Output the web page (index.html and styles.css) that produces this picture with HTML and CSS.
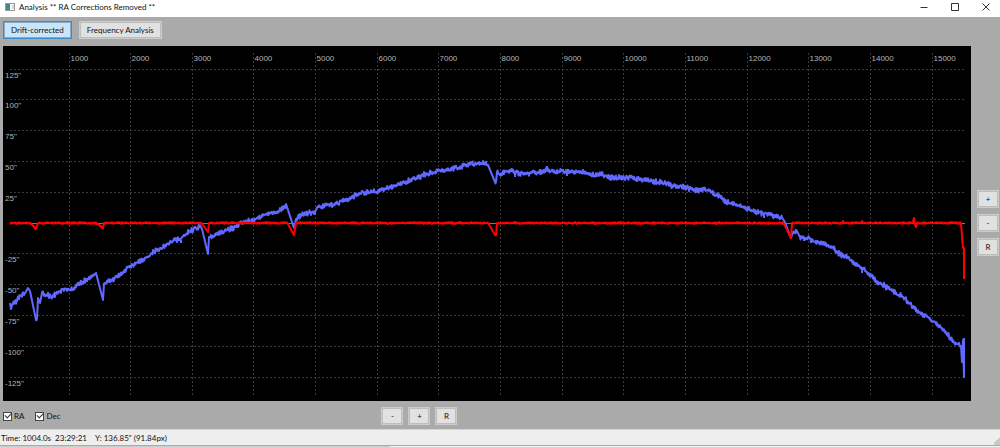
FILE: index.html
```html
<!DOCTYPE html>
<html lang="en">
<head>
    <meta charset="UTF-8">
    <meta name="viewport" content="width=device-width, initial-scale=1.0">
    <title>Analysis ** RA Corrections Removed **</title>
    <link rel="stylesheet" href="styles.css">
</head>
<body>
    <header class="titlebar">
        <svg class="app-icon" viewBox="0 0 10 8" aria-hidden="true">
            <defs>
                <linearGradient id="iconFill" x1="0" y1="0" x2="0" y2="1">
                    <stop offset="0" stop-color="#3f7fa8"/>
                    <stop offset="1" stop-color="#3f9a62"/>
                </linearGradient>
            </defs>
            <rect x="0.5" y="0.5" width="9" height="7" fill="#fafafa" stroke="#999"/>
            <rect x="1" y="1" width="4" height="6" fill="url(#iconFill)"/>
            <rect x="7" y="2" width="2" height="4" fill="#d5d5d5"/>
        </svg>
        <h1>Analysis ** RA Corrections Removed **</h1>
        <div class="window-buttons">
            <button aria-label="Minimize"><svg viewBox="0 0 8 8"><path d="M0.5 4.5H7.5"/></svg></button>
            <button aria-label="Maximize"><svg viewBox="0 0 8 8"><path d="M0.5 0.5H7.5V7.5H0.5Z"/></svg></button>
            <button aria-label="Close"><svg viewBox="0 0 8 8"><path d="M0.5 0.5L7.5 7.5M7.5 0.5L0.5 7.5"/></svg></button>
        </div>
    </header>

    <main class="workspace">
        <div class="toolbar">
            <button class="btn active">Drift-corrected</button>
            <button class="btn">Frequency Analysis</button>
        </div>

        <div class="chart-row">
            <svg class="chart" id="chart" viewBox="3 46 968 355" role="img" aria-label="Drift-corrected RA and Dec"></svg>
            <div class="zoom-vertical">
                <button class="btn square">+</button>
                <button class="btn square">-</button>
                <button class="btn square">R</button>
            </div>
        </div>

        <div class="controls">
            <div class="series">
                <label><input type="checkbox" id="showRa" checked>RA</label>
                <label><input type="checkbox" id="showDec" checked>Dec</label>
            </div>
            <div class="zoom-horizontal">
                <button class="btn square">-</button>
                <button class="btn square">+</button>
                <button class="btn square">R</button>
            </div>
        </div>
    </main>

    <footer class="statusbar">
        <span>Time: 1004.0s&nbsp; 23:29:21</span>
        <span>Y: 136.85" (91.84px)</span>
        <svg class="grip" viewBox="0 0 6 7" aria-hidden="true">
            <path d="M4 0h2v2H4zM2 2h4v2H2zM0 4h6v3H0z"/>
        </svg>
    </footer>
    <div class="bottom-strip"></div>

    <script src="script.js"></script>
</body>
</html>
```
FILE: styles.css
```css
* {
    box-sizing: border-box;
}
body {
    margin: 0;
    min-height: 100vh;
    display: flex;
    flex-direction: column;
    background-color: #aaa;
    color: #111;
    font-family: Lato, "Open Sans", sans-serif;
    font-size: 8px;
    line-height: 12px;
}
button, input {
    font: inherit;
    color: inherit;
}
.titlebar {
    display: flex;
    align-items: center;
    height: 17px;
    padding: 0 10px 3px 5px;
    background-color: #fff;
}
.titlebar h1 {
    margin: 0 auto 0 4px;
    font-size: 8px;
    font-weight: 400;
}
.app-icon {
    width: 10px;
    height: 8px;
}
.window-buttons {
    display: flex;
    gap: 23px;
}
.window-buttons button {
    display: flex;
    padding: 0;
    border: 0;
    background: none;
}
.window-buttons svg {
    width: 8px;
    height: 8px;
    fill: none;
    stroke: #333;
}
.workspace {
    flex: 1;
    display: flex;
    flex-direction: column;
    padding: 0 1px 0 3px;
}
.toolbar {
    display: flex;
    gap: 7px;
    padding: 4px 0 7px;
}
.btn {
    height: 18px;
    padding: 0 7px;
    border: 1px solid #ccc;
    background-color: #e1e1e1;
    box-shadow: inset 0 0 0 1px #bdbdbd;
    line-height: 14px;
    white-space: nowrap;
}
.btn.active {
    border-color: #3c8ac8;
    background-color: #cce4f7;
    box-shadow: inset 0 0 0 1px #7faed2;
}
.btn.square {
    width: 22px;
    padding: 0;
}
.chart-row {
    display: flex;
    align-items: center;
    gap: 6px;
}
.chart {
    flex: 1;
    min-width: 0;
    display: block;
    background-color: #000;
}
.zoom-vertical {
    display: flex;
    flex-direction: column;
    gap: 6px;
    padding-bottom: 2px;
}
.grid-line {
    stroke: #3c3c3c;
    stroke-dasharray: 2 2;
}
.zero-line {
    stroke: #777;
}
.axis-label {
    fill: #b4b4b4;
    font-family: "Liberation Sans", Arial, sans-serif;
    font-size: 8px;
}
.trace {
    fill: none;
    stroke-linejoin: round;
}
.trace.ra {
    stroke: #6068ff;
    stroke-width: 2;
}
.trace.dec {
    stroke: #f00;
    stroke-width: 2;
}
.controls {
    display: grid;
    grid-template-columns: 38% auto;
    justify-content: start;
    align-items: center;
    height: 28px;
    padding: 2px 0 0;
}
.series {
    display: flex;
    gap: 11px;
}
.series label {
    display: flex;
    align-items: center;
    gap: 2px;
}
.series input {
    appearance: none;
    width: 9px;
    height: 9px;
    margin: 0;
    border: 1px solid #444;
    background: #fff;
    display: grid;
    place-items: center;
}
.series input:checked::before {
    content: "";
    width: 5px;
    height: 3px;
    margin-bottom: 2px;
    border: solid #333;
    border-width: 0 0 1px 1px;
    transform: rotate(-45deg);
}
.zoom-horizontal {
    display: flex;
    gap: 5px;
}
.statusbar {
    display: flex;
    align-items: center;
    gap: 8px;
    height: 16px;
    padding-left: 1px;
    border-top: 1px solid #d5d5d5;
    background-color: #eee;
}
.grip {
    width: 6px;
    height: 7px;
    margin-left: auto;
    align-self: flex-end;
    fill: #c8c8c8;
}
.bottom-strip {
    height: 2px;
    border-top: 1px solid #aaa;
    background: linear-gradient(to right, #ccc 39%, #f5f5f5 39%);
}
```
FILE: script.js
```javascript
const SVG_NS = 'http://www.w3.org/2000/svg';
const chart = document.getElementById('chart');

const ZERO_Y = 223.5;
const STEP_Y = 30.8;
const FIRST_X = 69.5;
const STEP_X = 61.65;

const raPoints = [
    [10, 303], [11, 309], [12, 305], [16, 301], [20, 297], [24, 293], [28, 288], [30, 291], [36, 320], [37, 319],
    [38, 298], [40, 303], [42, 293], [45, 295], [53, 296], [60, 291], [63, 289], [73, 290], [80, 283],
    [88, 279], [96, 273], [103, 300], [104, 284], [110, 281], [120, 275], [130, 266], [142, 260],
    [152, 253], [165, 246], [175, 240], [181, 240], [184, 235], [192, 230], [200, 226], [202, 229],
    [208, 254], [209, 237], [213, 236], [222, 232], [235, 227], [246, 221], [255, 221], [258, 217],
    [265, 214], [275, 213], [286, 206], [294, 228], [296, 219], [302, 214], [314, 212], [317, 208],
    [325, 205], [335, 204], [348, 199], [360, 193], [373, 192], [385, 189], [400, 184], [415, 178],
    [430, 173], [440, 171], [455, 168], [470, 164], [487, 163], [488, 165], [495, 182], [496, 182],
    [497, 172], [500, 175], [506, 171], [512, 170], [516, 173], [530, 173], [540, 172], [547, 169],
    [555, 172], [567, 171], [583, 172], [592, 175], [600, 174], [610, 178], [622, 177], [635, 178],
    [650, 181], [665, 183], [675, 187], [685, 187], [692, 190], [706, 190], [716, 194], [726, 202],
    [735, 204], [748, 209], [760, 213], [772, 215], [782, 218], [785, 222], [790, 236], [791, 238],
    [793, 232], [797, 231], [800, 237], [808, 238], [814, 242], [825, 243], [835, 250], [842, 256],
    [848, 257], [855, 264], [862, 268], [870, 275], [877, 282], [885, 286], [895, 292], [905, 299],
    [915, 309], [925, 316], [935, 323], [945, 332], [955, 343], [961, 346], [962, 362], [963, 340],
    [964, 377], [964, 338]
];

const decPoints = [
    [10, 223], [30, 223], [36, 229], [38, 223], [96, 223], [103, 228], [104, 223], [201, 223],
    [208, 232], [209, 223], [287, 223], [294, 235], [296, 223], [488, 223], [495, 235], [496, 235],
    [497, 223], [783, 223], [791, 238], [792, 223], [842, 223], [843, 221], [844, 223], [861, 223],
    [862, 221], [863, 223], [913, 223], [914, 218], [915, 225], [916, 227], [917, 223], [961, 223],
    [963, 248], [964, 248], [964, 279]
];

// short vertical ticks below or above the RA trace
const raSpikes = [[181, 243], [315, 215], [515, 177], [547, 166], [567, 176], [637, 182], [764, 218], [804, 241], [862, 273], [916, 312]];

let seed = 17;
function random() {
    seed = (seed * 16807) % 2147483647;
    return seed / 2147483647;
}

function add(name, attrs, text) {
    const el = document.createElementNS(SVG_NS, name);
    for (const key in attrs) el.setAttribute(key, attrs[key]);
    if (text) el.textContent = text;
    chart.appendChild(el);
    return el;
}

function noisyPath(points, amount) {
    let d = `M${points[0]}`;
    for (let i = 1; i < points.length; i++) {
        const [x0, y0] = points[i - 1];
        const [x1, y1] = points[i];
        const steep = Math.abs(y1 - y0) > 1.2 * (x1 - x0);
        const steps = steep ? 1 : Math.round((x1 - x0) * 2);
        for (let s = 1; s <= steps; s++) {
            const t = s / steps;
            const noise = steep ? 0 : (random() - random()) * amount;
            d += `L${(x0 + (x1 - x0) * t).toFixed(1)} ${(y0 + (y1 - y0) * t + noise).toFixed(1)}`;
        }
    }
    return d;
}

for (let n = -5; n <= 5; n++) {
    const y = Math.round(ZERO_Y - n * STEP_Y) - 0.5;
    if (n !== 0) {
        add('line', { class: 'grid-line', x1: 10, x2: 965, y1: y, y2: y });
        add('text', { class: 'axis-label', x: 5, y: y + 8 }, `${n * 25}"`);
    }
}
for (let n = 0; n < 15; n++) {
    const x = Math.round(FIRST_X + n * STEP_X) - 0.5;
    add('line', { class: 'grid-line', x1: x, x2: x, y1: 53, y2: 395 });
    add('text', { class: 'axis-label', x: x + 1, y: 61 }, `${(n + 1) * 1000}`);
}
add('line', { class: 'zero-line', x1: 10, x2: 965, y1: 223.5, y2: 223.5 });

let raPath = noisyPath(raPoints, 3);
raSpikes.forEach(([x, y]) => {
    const i = raPoints.findIndex(p => p[0] > x);
    const [x0, y0] = raPoints[i - 1];
    const [x1, y1] = raPoints[i];
    raPath += `M${x} ${y0 + (y1 - y0) * (x - x0) / (x1 - x0)}V${y}`;
});
const ra = add('path', { class: 'trace ra', d: raPath });
const dec = add('path', { class: 'trace dec', d: noisyPath(decPoints, 1) });

document.getElementById('showRa').addEventListener('change', e => {
    ra.style.display = e.target.checked ? '' : 'none';
});
document.getElementById('showDec').addEventListener('change', e => {
    dec.style.display = e.target.checked ? '' : 'none';
});
```
